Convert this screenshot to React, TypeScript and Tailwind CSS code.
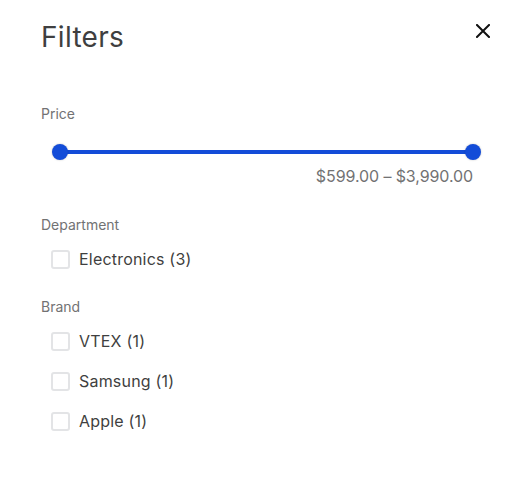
import React from "react";

const font = { fontFamily: "Inter, 'Noto Sans', sans-serif" };

function Checkbox({ label }: { label: string }) {
  return (
    <label className="flex h-[40px] items-center pl-[10px]">
      <span className="box-border h-[19px] w-[19px] rounded-[3px] border-2 border-[#e3e4e6] bg-white" />
      <span className="ml-[9px] text-[16px] leading-[24px] tracking-[0.2px] text-[#3f3f40]">{label}</span>
    </label>
  );
}

export default function App() {
  return (
    <div className="h-[494px] w-[514px] bg-white px-[41px] pt-[20px]" style={font}>
      <div className="mr-[-17px] flex h-[34px] items-center justify-between">
        <h1 className="text-[28px] leading-[34px] font-normal tracking-[0.3px] text-[#3f3f40]">Filters</h1>
        <svg width="14" height="14" viewBox="0 0 14 14" className="mt-[-12px]">
          <path d="M1 1L13 13M13 1L1 13" stroke="#111" strokeWidth="2" strokeLinecap="square" />
        </svg>
      </div>
      <div className="mt-[50px] text-[14px] leading-[20px] text-[#727273]">Price</div>
      <div className="mt-[20px] flex h-[16px] items-center">
        <div className="relative ml-[19px] h-[4px] w-[414px] bg-[#134cd8]">
          <span className="absolute left-[-8px] top-[-6px] h-[16px] w-[16px] rounded-full bg-[#134cd8] shadow-[0_0_2px_rgba(0,0,0,0.25)]" />
          <span className="absolute right-[-8px] top-[-6px] h-[16px] w-[16px] rounded-full bg-[#134cd8] shadow-[0_0_2px_rgba(0,0,0,0.25)]" />
        </div>
      </div>
      <div className="mt-[4px] text-right text-[16px] leading-[24px] tracking-[-0.1px] text-[#727273]">
        $599.00 – $3,990.00
      </div>
      <div className="mt-[27px] text-[14px] leading-[20px] text-[#727273]">Department</div>
      <div className="mt-[4px]">
        <Checkbox label="Electronics (3)" />
      </div>
      <div className="mt-[18px] text-[14px] leading-[20px] text-[#727273]">Brand</div>
      <div className="mt-[4px] flex flex-col">
        <Checkbox label="VTEX (1)" />
        <Checkbox label="Samsung (1)" />
        <Checkbox label="Apple (1)" />
      </div>
    </div>
  );
}
